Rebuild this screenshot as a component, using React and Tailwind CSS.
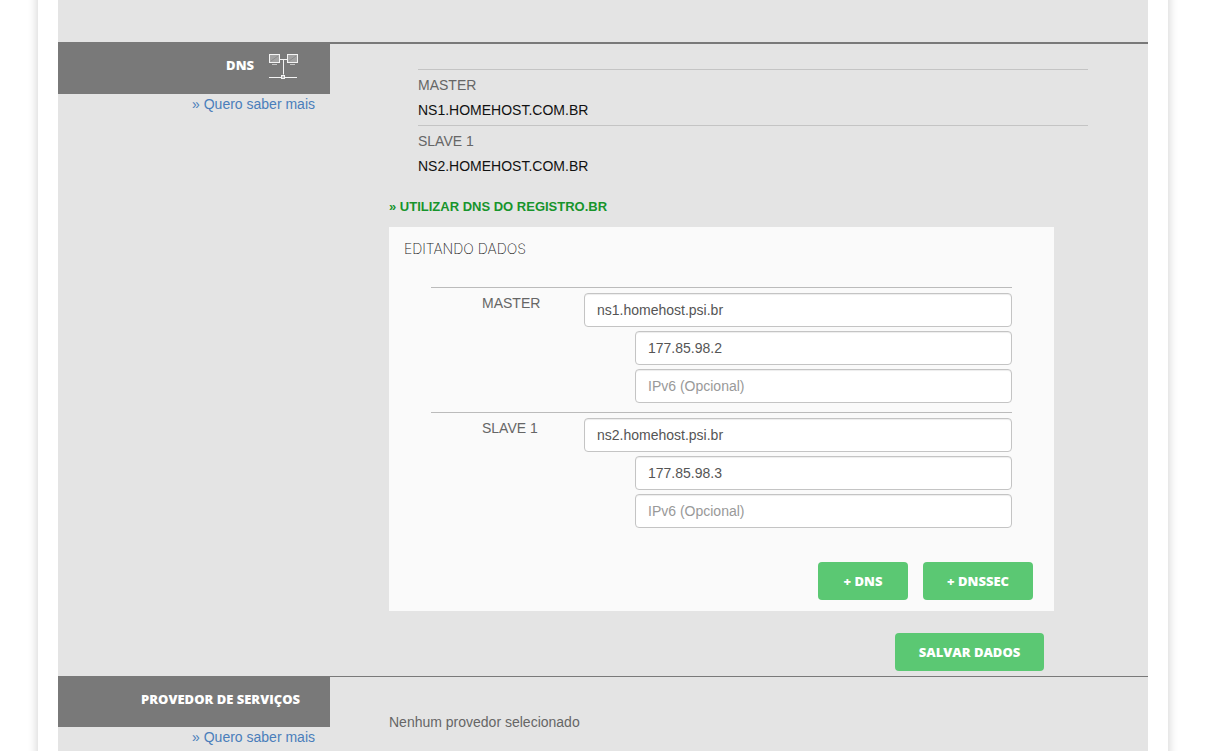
import React from 'react';

const currentServers = [
  { label: 'MASTER', host: 'NS1.HOMEHOST.COM.BR' },
  { label: 'SLAVE 1', host: 'NS2.HOMEHOST.COM.BR' },
];

const editedServers = [
  { id: 'master', label: 'MASTER', host: 'ns1.homehost.psi.br', ipv4: '177.85.98.2' },
  { id: 'slave1', label: 'SLAVE 1', host: 'ns2.homehost.psi.br', ipv4: '177.85.98.3' },
];

function NetworkIcon() {
  return (
    <svg width="31" height="28" viewBox="0 0 31 28" fill="none" stroke="#f4f4f4" aria-hidden="true">
      <rect x="1.5" y="3.5" width="10" height="8" fill="#a3a3a3" />
      <rect x="19.5" y="3.5" width="10" height="8" fill="#a3a3a3" />
      <path d="M3 10l7-5M21 10l7-5" stroke="#8c8c8c" />
      <path d="M4 13.5h5M22 13.5h5" stroke="#c4c4c4" />
      <path d="M12 8.5h7M15.5 8.5v15M1 26.5h28" />
      <rect x="13.5" y="24.5" width="3" height="3" fill="#b5b5b5" />
    </svg>
  );
}

function Section({ title, icon, className, children }) {
  return (
    <section className="flex">
      <aside className="w-[272px] shrink-0 text-right">
        <h2 className={`flex items-center justify-end gap-[14px] bg-[#797979] pb-[6px] font-['Open_Sans'] text-[13px] font-extrabold text-white ${className}`}>
          {title}
          {icon}
        </h2>
        <a href="#ajuda" className="mr-[15px] text-[#4a7ebb] hover:underline">
          » Quero saber mais
        </a>
      </aside>
      {children}
    </section>
  );
}

function TextField({ className = '', ...props }) {
  return (
    <input
      type="text"
      className={`h-[34px] rounded border border-[#c4c4c4] bg-white px-3 text-sm text-[#555] shadow-[inset_0_1px_1px_rgba(0,0,0,0.075)] placeholder:text-[#999] ${className}`}
      {...props}
    />
  );
}

function GreenButton({ className, children, ...props }) {
  return (
    <button
      type="button"
      className={`h-[38px] rounded bg-[#5bc873] font-['Open_Sans'] text-[13px] font-extrabold text-white hover:bg-[#4db865] ${className}`}
      {...props}
    >
      {children}
    </button>
  );
}

function ServerFields({ server }) {
  return (
    <div className="flex border-t border-[#bbb] pt-[5px] pb-[9px]">
      <label htmlFor={`${server.id}-host`} className="w-[153px] shrink-0 pl-[51px]">
        {server.label}
      </label>
      <div className="flex flex-1 flex-col gap-1">
        <TextField id={`${server.id}-host`} defaultValue={server.host} />
        <TextField className="ml-[51px]" aria-label={`${server.label} IPv4`} defaultValue={server.ipv4} />
        <TextField className="ml-[51px]" aria-label={`${server.label} IPv6`} placeholder="IPv6 (Opcional)" />
      </div>
    </div>
  );
}

export default function App() {
  return (
    <div className="min-h-screen overflow-hidden bg-white pr-[39px] pl-[38px] font-['Liberation_Sans',sans-serif] text-sm leading-5 text-[#666]">
      <main className="-my-5 bg-white px-5 py-5 shadow-[0_0_10px_rgba(0,0,0,0.2)]">
        <div className="min-h-screen bg-[#e4e4e4] pt-[42px]">
          <Section title="DNS" icon={<NetworkIcon />} className="h-[52px] pr-[31px]">
            <form className="flex-1 border-t-2 border-[#797979] pt-[25px] pb-[5px] pl-[59px]" onSubmit={(e) => e.preventDefault()}>
              <dl className="mr-[60px] ml-[29px]">
                {currentServers.map((server) => (
                  <div key={server.label} className="border-t border-[#c4c4c4] py-[5px]">
                    <dt>{server.label}</dt>
                    <dd className="mt-[5px] text-[#111]">{server.host}</dd>
                  </div>
                ))}
              </dl>
              <a href="#registro" className="mt-4 mb-[10px] inline-block text-[13px] font-bold text-[#17942c]">
                » UTILIZAR DNS DO REGISTRO.BR
              </a>

              <div className="mr-[94px] bg-[#fafafa] pt-3 pb-[11px]">
                <h3 className="mb-7 ml-[15px] font-['Inter'] font-extralight text-[#222]">EDITANDO DADOS</h3>
                <div className="px-[42px]">
                  {editedServers.map((server) => (
                    <ServerFields key={server.id} server={server} />
                  ))}
                </div>
                <div className="mt-[25px] mr-[21px] flex justify-end gap-[15px]">
                  <GreenButton className="w-[90px]">+ DNS</GreenButton>
                  <GreenButton className="w-[110px]">+ DNSSEC</GreenButton>
                </div>
              </div>

              <div className="mt-[22px] mr-[104px] flex justify-end">
                <GreenButton type="submit" className="w-[149px]">SALVAR DADOS</GreenButton>
              </div>
            </form>
          </Section>

          <Section title="PROVEDOR DE SERVIÇOS" className="h-[51px] pr-[30px]">
            <div className="flex-1 border-t border-[#797979] pt-[35px] pl-[59px]">
              <p>Nenhum provedor selecionado</p>
            </div>
          </Section>
        </div>
      </main>
    </div>
  );
}
